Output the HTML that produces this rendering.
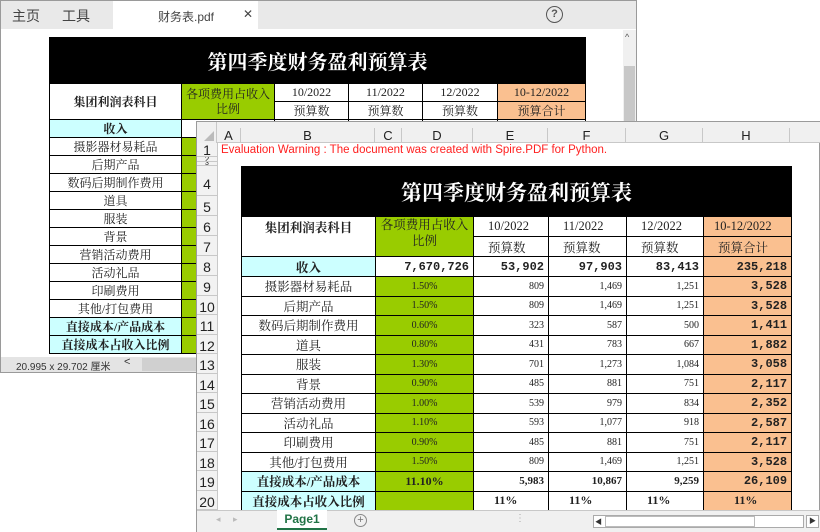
<!DOCTYPE html>
<html><head><meta charset="utf-8"><style>
*{margin:0;padding:0;box-sizing:border-box}
body{width:820px;height:532px;position:relative;overflow:hidden;background:#fff;font-family:"Liberation Sans","Noto Sans CJK SC",sans-serif}
.a{position:absolute}
table{border-collapse:collapse;table-layout:fixed;position:absolute}
td{border:1px solid #000;text-align:center;overflow:hidden;white-space:nowrap;padding:0;font-family:"Liberation Serif","Noto Serif CJK SC",serif;color:#222}
.g{background:#99cc00}
.c{background:#ccffff;font-weight:bold}
.o{background:#fac090}
.r{text-align:right;padding-right:4px}
.m{font-family:"Liberation Mono","Noto Serif CJK SC",monospace;font-weight:bold}
.rn div{position:absolute;left:0;width:20px;text-align:center;font-size:14px;border-bottom:1px solid #c8c8c8;background:#f2f2f2;color:#222;overflow:hidden}
</style></head><body>
<!-- back window -->
<div class="a" style="left:0;top:0;width:637px;height:373px;border:1px solid #9a9a9a;background:#fff"></div>
<div class="a" style="left:1px;top:1px;width:635px;height:28px;background:#e9e9e9"></div>
<div class="a" style="left:12px;top:6px;font-size:14px;color:#444">主页</div>
<div class="a" style="left:62px;top:6px;font-size:14px;color:#444">工具</div>
<div class="a" style="left:113px;top:1px;width:145px;height:29px;background:#fff"></div>
<div class="a" style="left:158px;top:8px;font-size:12px;color:#444">财务表.pdf</div>
<div class="a" style="left:243px;top:7px;font-size:12px;color:#444">✕</div>
<div class="a" style="left:546px;top:6px;width:17px;height:17px;border:1.5px solid #555;border-radius:50%;font-size:11px;text-align:center;line-height:14px;color:#555;font-weight:bold">?</div>
<div class="a" style="left:623px;top:30px;width:13px;height:327px;background:#f0f0f0"></div>
<div class="a" style="left:624px;top:66px;width:11px;height:290px;background:#c8c8c8"></div>
<div class="a" style="left:625px;top:32px;font-size:9px;color:#555">^</div>
<table style="left:49px;top:37px;width:536px">
<col style="width:132px"><col style="width:93px"><col style="width:74px"><col style="width:74px"><col style="width:75px"><col style="width:88px">
<tr style="height:46px"><td colspan="6" style="background:#000;color:#fff;font-size:20px;font-weight:bold">第四季度财务盈利预算表</td></tr>
<tr style="height:18px;font-size:12px"><td rowspan="2" style="font-weight:bold;font-size:12px">集团利润表科目</td><td rowspan="2" class="g" style="font-size:12px;line-height:15px;white-space:normal">各项费用占收入比例</td><td>10/2022</td><td>11/2022</td><td>12/2022</td><td class="o">10-12/2022</td></tr>
<tr style="height:18px;font-size:12px"><td>预算数</td><td>预算数</td><td>预算数</td><td class="o">预算合计</td></tr>
<tr style="height:18px;font-size:12px"><td class="c">收入</td><td></td><td></td><td></td><td></td><td></td></tr>
<tr style="height:18px;font-size:12px"><td>摄影器材易耗品</td><td class="g"></td><td></td><td></td><td></td><td></td></tr>
<tr style="height:18px;font-size:12px"><td>后期产品</td><td class="g"></td><td></td><td></td><td></td><td></td></tr>
<tr style="height:18px;font-size:12px"><td>数码后期制作费用</td><td class="g"></td><td></td><td></td><td></td><td></td></tr>
<tr style="height:18px;font-size:12px"><td>道具</td><td class="g"></td><td></td><td></td><td></td><td></td></tr>
<tr style="height:18px;font-size:12px"><td>服装</td><td class="g"></td><td></td><td></td><td></td><td></td></tr>
<tr style="height:18px;font-size:12px"><td>背景</td><td class="g"></td><td></td><td></td><td></td><td></td></tr>
<tr style="height:18px;font-size:12px"><td>营销活动费用</td><td class="g"></td><td></td><td></td><td></td><td></td></tr>
<tr style="height:18px;font-size:12px"><td>活动礼品</td><td class="g"></td><td></td><td></td><td></td><td></td></tr>
<tr style="height:18px;font-size:12px"><td>印刷费用</td><td class="g"></td><td></td><td></td><td></td><td></td></tr>
<tr style="height:18px;font-size:12px"><td>其他/打包费用</td><td class="g"></td><td></td><td></td><td></td><td></td></tr>
<tr style="height:18px;font-size:12px"><td class="c">直接成本/产品成本</td><td class="g"></td><td></td><td></td><td></td><td></td></tr>
<tr style="height:18px;font-size:12px"><td class="c">直接成本占收入比例</td><td class="g"></td><td></td><td></td><td></td><td></td></tr>
</table>
<div class="a" style="left:1px;top:357px;width:622px;height:15px;background:#e4e4e4"></div>
<div class="a" style="left:16px;top:358px;font-size:10px;color:#333">20.995 x 29.702 厘米</div>
<div class="a" style="left:124px;top:356px;font-size:11px;color:#333">&lt;</div>
<div class="a" style="left:142px;top:358px;width:56px;height:13px;background:#d0d0d0"></div>

<!-- front window -->
<div class="a" style="left:196px;top:121px;width:624px;height:411px;border:1px solid #9a9a9a;background:#fff"></div>
<div class="a" style="left:197px;top:122px;width:623px;height:21px;background:#f0f0f0;border-bottom:1px solid #c8c8c8"></div>
<div class="a" style="left:197px;top:122px;width:20px;height:21px;background:#f0f0f0;border-right:1px solid #c8c8c8"></div>
<div class="a" style="left:204px;top:131px;width:0;height:0;border-left:10px solid transparent;border-bottom:10px solid #bbb"></div>
<div class="a" style="top:128px;left:217px;width:603px;height:15px;font-size:13px;color:#222">
<div class="a" style="left:0;width:24px;text-align:center;border-right:1px solid #c8c8c8;height:15px">A</div>
<div class="a" style="left:24px;width:134px;text-align:center;border-right:1px solid #c8c8c8;height:15px">B</div>
<div class="a" style="left:158px;width:27px;text-align:center;border-right:1px solid #c8c8c8;height:15px">C</div>
<div class="a" style="left:185px;width:71px;text-align:center;border-right:1px solid #c8c8c8;height:15px">D</div>
<div class="a" style="left:256px;width:75px;text-align:center;border-right:1px solid #c8c8c8;height:15px">E</div>
<div class="a" style="left:331px;width:78px;text-align:center;border-right:1px solid #c8c8c8;height:15px">F</div>
<div class="a" style="left:409px;width:77px;text-align:center;border-right:1px solid #c8c8c8;height:15px">G</div>
<div class="a" style="left:486px;width:87px;text-align:center;border-right:1px solid #c8c8c8;height:15px">H</div>
</div>
<div class="a rn" style="left:197px;top:143px;width:21px;height:367px;border-right:1px solid #c8c8c8;background:#f2f2f2">
<div style="top:0;height:14px;line-height:14px">1</div>
<div style="top:14px;height:5px;line-height:6px;font-size:8px">2</div>
<div style="top:19px;height:4px;line-height:4px;font-size:7px">3</div>
<div style="top:23px;height:30px;line-height:36px">4</div>
<div style="top:53px;height:20px;line-height:22px">5</div>
<div style="top:73px;height:20px;line-height:22px">6</div>
<div style="top:93px;height:20px;line-height:22px">7</div>
<div style="top:113px;height:20px;line-height:22px">8</div>
<div style="top:133px;height:19.5px;line-height:22px">9</div>
<div style="top:152.5px;height:19.5px;line-height:22px">10</div>
<div style="top:172px;height:19.5px;line-height:22px">11</div>
<div style="top:191.5px;height:19.5px;line-height:22px">12</div>
<div style="top:211px;height:19.5px;line-height:22px">13</div>
<div style="top:230.5px;height:19.5px;line-height:22px">14</div>
<div style="top:250px;height:19.5px;line-height:22px">15</div>
<div style="top:269.5px;height:19.5px;line-height:22px">16</div>
<div style="top:289px;height:19.5px;line-height:22px">17</div>
<div style="top:308.5px;height:19.5px;line-height:22px">18</div>
<div style="top:328px;height:19.5px;line-height:22px">19</div>
<div style="top:347.5px;height:19.5px;line-height:22px">20</div>
</div>
<div class="a" style="left:221px;top:144px;font-size:11.5px;color:#ff2020;white-space:nowrap">Evaluation Warning : The document was created with Spire.PDF for Python.</div>
<table style="left:241px;top:166px;width:550px">
<col style="width:134px"><col style="width:98px"><col style="width:75px"><col style="width:78px"><col style="width:77px"><col style="width:88px">
<tr style="height:50px"><td colspan="6" style="background:#000;color:#fff;font-size:21px;font-weight:bold">第四季度财务盈利预算表</td></tr>
<tr style="height:20px;font-size:12.5px"><td rowspan="2" style="font-weight:bold;vertical-align:top;padding-top:1px">集团利润表科目</td><td rowspan="2" class="g" style="white-space:normal;line-height:16px;vertical-align:top">各项费用占收入比例</td><td style="text-align:left;padding-left:14px">10/2022</td><td style="text-align:left;padding-left:14px">11/2022</td><td style="text-align:left;padding-left:14px">12/2022</td><td class="o" style="text-align:left;padding-left:10px">10-12/2022</td></tr>
<tr style="height:20px;font-size:12.5px"><td style="text-align:left;padding-left:14px">预算数</td><td style="text-align:left;padding-left:14px">预算数</td><td style="text-align:left;padding-left:14px">预算数</td><td class="o" style="text-align:left;padding-left:14px">预算合计</td></tr>
<tr style="height:20px;font-size:12px"><td class="c" style="font-size:12.5px">收入</td><td class="r m">7,670,726</td><td class="r m">53,902</td><td class="r m">97,903</td><td class="r m">83,413</td><td class="r m o">235,218</td></tr>
<tr style="height:19.5px;font-size:12.5px"><td>摄影器材易耗品</td><td class="g" style="font-size:10px">1.50%</td><td class="r" style="font-size:10px">809</td><td class="r" style="font-size:10px">1,469</td><td class="r" style="font-size:10px">1,251</td><td class="r m o" style="font-size:12px">3,528</td></tr>
<tr style="height:19.5px;font-size:12.5px"><td>后期产品</td><td class="g" style="font-size:10px">1.50%</td><td class="r" style="font-size:10px">809</td><td class="r" style="font-size:10px">1,469</td><td class="r" style="font-size:10px">1,251</td><td class="r m o" style="font-size:12px">3,528</td></tr>
<tr style="height:19.5px;font-size:12.5px"><td>数码后期制作费用</td><td class="g" style="font-size:10px">0.60%</td><td class="r" style="font-size:10px">323</td><td class="r" style="font-size:10px">587</td><td class="r" style="font-size:10px">500</td><td class="r m o" style="font-size:12px">1,411</td></tr>
<tr style="height:19.5px;font-size:12.5px"><td>道具</td><td class="g" style="font-size:10px">0.80%</td><td class="r" style="font-size:10px">431</td><td class="r" style="font-size:10px">783</td><td class="r" style="font-size:10px">667</td><td class="r m o" style="font-size:12px">1,882</td></tr>
<tr style="height:19.5px;font-size:12.5px"><td>服装</td><td class="g" style="font-size:10px">1.30%</td><td class="r" style="font-size:10px">701</td><td class="r" style="font-size:10px">1,273</td><td class="r" style="font-size:10px">1,084</td><td class="r m o" style="font-size:12px">3,058</td></tr>
<tr style="height:19.5px;font-size:12.5px"><td>背景</td><td class="g" style="font-size:10px">0.90%</td><td class="r" style="font-size:10px">485</td><td class="r" style="font-size:10px">881</td><td class="r" style="font-size:10px">751</td><td class="r m o" style="font-size:12px">2,117</td></tr>
<tr style="height:19.5px;font-size:12.5px"><td>营销活动费用</td><td class="g" style="font-size:10px">1.00%</td><td class="r" style="font-size:10px">539</td><td class="r" style="font-size:10px">979</td><td class="r" style="font-size:10px">834</td><td class="r m o" style="font-size:12px">2,352</td></tr>
<tr style="height:19.5px;font-size:12.5px"><td>活动礼品</td><td class="g" style="font-size:10px">1.10%</td><td class="r" style="font-size:10px">593</td><td class="r" style="font-size:10px">1,077</td><td class="r" style="font-size:10px">918</td><td class="r m o" style="font-size:12px">2,587</td></tr>
<tr style="height:19.5px;font-size:12.5px"><td>印刷费用</td><td class="g" style="font-size:10px">0.90%</td><td class="r" style="font-size:10px">485</td><td class="r" style="font-size:10px">881</td><td class="r" style="font-size:10px">751</td><td class="r m o" style="font-size:12px">2,117</td></tr>
<tr style="height:19.5px;font-size:12.5px"><td>其他/打包费用</td><td class="g" style="font-size:10px">1.50%</td><td class="r" style="font-size:10px">809</td><td class="r" style="font-size:10px">1,469</td><td class="r" style="font-size:10px">1,251</td><td class="r m o" style="font-size:12px">3,528</td></tr>
<tr style="height:19.5px;font-size:12.5px"><td class="c">直接成本/产品成本</td><td class="g" style="font-weight:bold;font-size:12px">11.10%</td><td class="r" style="font-weight:bold;font-size:11px">5,983</td><td class="r" style="font-weight:bold;font-size:11px">10,867</td><td class="r" style="font-weight:bold;font-size:11px">9,259</td><td class="r m o" style="font-size:12px">26,109</td></tr>
<tr style="height:19.5px;font-size:12.5px"><td class="c">直接成本占收入比例</td><td class="g"></td><td style="font-weight:bold;font-size:12px;text-align:left;padding-left:20px">11%</td><td style="font-weight:bold;font-size:12px;text-align:left;padding-left:20px">11%</td><td style="font-weight:bold;font-size:12px;text-align:left;padding-left:20px">11%</td><td class="o" style="font-weight:bold;font-size:12px;text-align:left;padding-left:30px">11%</td></tr>
</table>
<!-- bottom bar -->
<div class="a" style="left:197px;top:510px;width:623px;height:22px;background:#f0f0f0;border-top:1px solid #c8c8c8"></div>
<div class="a" style="left:216px;top:514px;font-size:9px;color:#bbb">◂ &nbsp;&nbsp;&nbsp; ▸</div>
<div class="a" style="left:277px;top:510px;width:50px;height:20px;background:#fff;border-bottom:2px solid #217346;font-size:12px;font-weight:bold;color:#217346;text-align:center;line-height:19px">Page1</div>
<div class="a" style="left:354px;top:514px;width:13px;height:13px;border:1px solid #888;border-radius:50%;font-size:11px;text-align:center;line-height:11px;color:#777">+</div>
<div class="a" style="left:515px;top:513px;font-size:10px;color:#aaa">⋮</div>
<div class="a" style="left:593px;top:515px;width:211px;height:13px;border:1px solid #aaa;background:#fff"></div>
<div class="a" style="left:595px;top:517px;width:10px;height:9px;font-size:7px;color:#333">◀</div>
<div class="a" style="left:605px;top:516px;width:150px;height:11px;border:1px solid #bbb;background:#fff"></div>
<div class="a" style="left:806px;top:515px;width:13px;height:13px;font-size:7px;color:#333;border:1px solid #aaa;background:#fff;text-align:center;line-height:11px">▶</div>
</body></html>
